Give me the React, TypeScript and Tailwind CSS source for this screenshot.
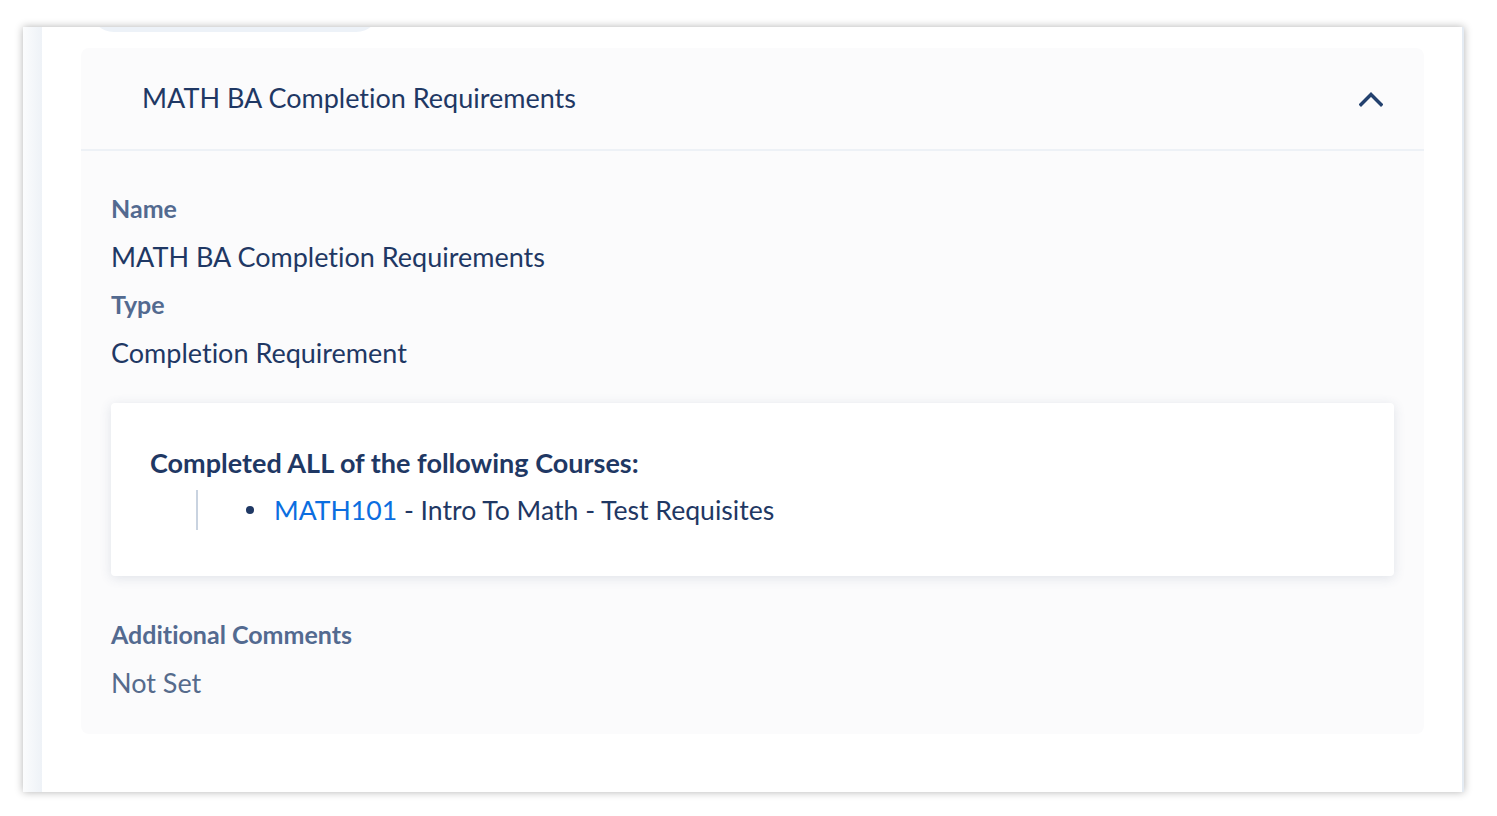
import React from 'react';

const font = { fontFamily: 'Lato, "Open Sans", "Liberation Sans", sans-serif' };

function ChevronUp() {
  return (
    <svg width="24" height="16" viewBox="0 0 24 16" fill="none" aria-hidden="true">
      <polyline points="2,13.5 12,3.5 22,13.5" stroke="#23416e" strokeWidth="3.4" strokeLinecap="square" />
    </svg>
  );
}

function Field({ label, value, muted }: { label: string; value: string; muted?: boolean }) {
  return (
    <div>
      <div className="text-[25px] leading-[47px] font-bold text-[#536a90]">{label}</div>
      <div className={`text-[27px] leading-[49px] ${muted ? 'text-[#566b8c]' : 'text-[#1f3864]'}`}>{value}</div>
    </div>
  );
}

export default function App() {
  return (
    <div className="min-h-screen bg-white pt-[27px] pl-[23px] [font-variant-ligatures:none]" style={font}>
      <div className="flex h-[765px] w-[1441px] overflow-hidden bg-white shadow-[0_0_8px_rgba(0,0,0,0.3)]">
        <div className="w-[19px] shrink-0 bg-gradient-to-r from-[#fbfcfd] to-[#eef2f7]" />
        <div className="flex flex-1 flex-col border-r-2 border-[#e4ebf3] pl-[39px] pr-[38px]">
          <div className="-mt-[20px] ml-[9px] h-[25px] w-[290px] rounded-b-[24px] bg-[#edf2f8]" />
          <div className="mt-[16px] rounded-lg bg-[#fbfbfc]">
            <div className="flex h-[103px] items-center justify-between border-b-2 border-[#edf1f6] pl-[61px] pr-[41px]">
              <h2 className="text-[27px] text-[#1f3864]">MATH BA Completion Requirements</h2>
              <ChevronUp />
            </div>
            <div className="px-[30px] pt-[34px] pb-[27px]">
              <Field label="Name" value="MATH BA Completion Requirements" />
              <Field label="Type" value="Completion Requirement" />
              <div className="mt-[26px] rounded bg-white pt-[40px] pb-[46px] pl-[39px] shadow-[0_2px_12px_rgba(60,80,110,0.14)]">
                <div className="text-[27px] leading-[40px] font-bold text-[#1f3864]">Completed ALL of the following Courses:</div>
                <div className="ml-[46px] mt-[7px] border-l-2 border-[#c9d3e0] pl-[48px]">
                  <div className="flex items-center text-[26.6px] leading-[40px] text-[#1f3864]">
                    <span className="mr-[20px] h-[8px] w-[8px] rounded-full bg-[#1f3864]" />
                    <span className="text-[#0b6ee0]">MATH101</span>
                    <span>&nbsp;- Intro To Math - Test Requisites</span>
                  </div>
                </div>
              </div>
              <div className="mt-[35px]">
                <Field label="Additional Comments" value="Not Set" muted />
              </div>
            </div>
          </div>
        </div>
      </div>
    </div>
  );
}
